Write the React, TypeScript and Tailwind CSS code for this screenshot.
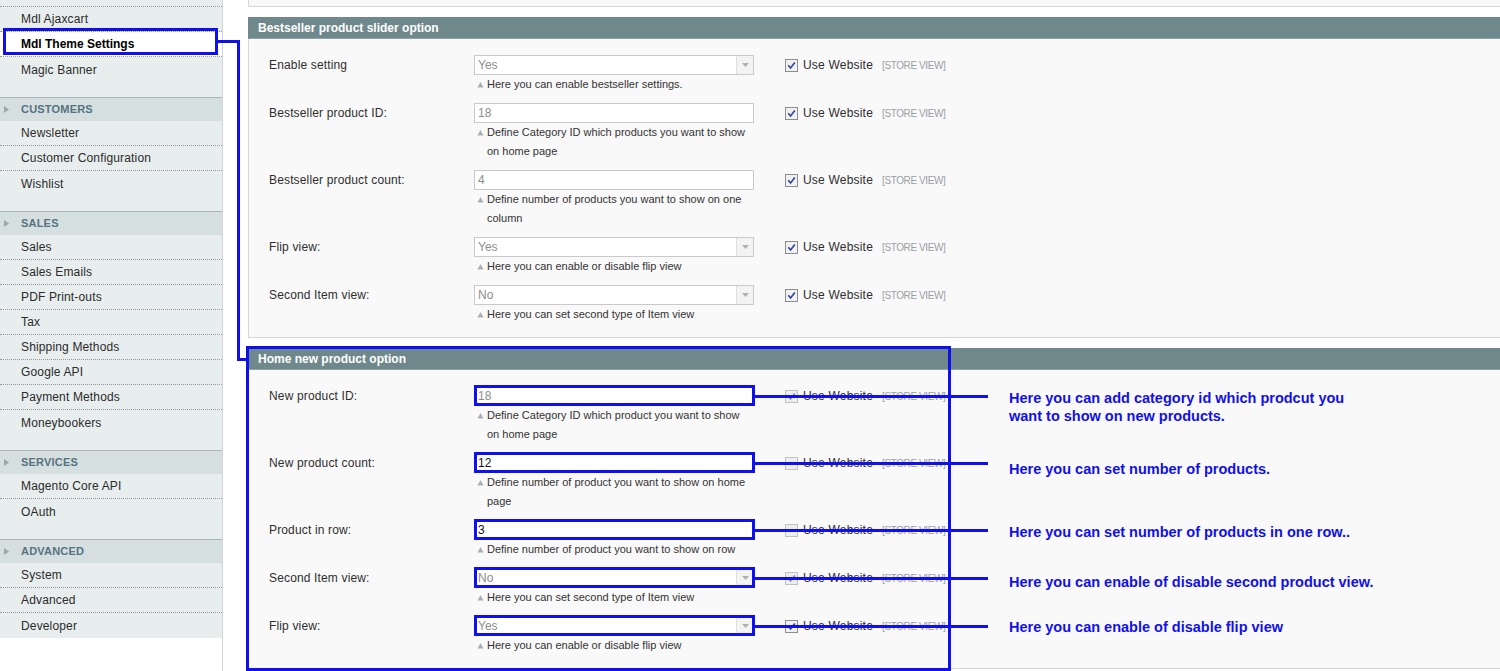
import React from "react";

const BLUE = "border-[#1010ee]";

type Row = {
  label: string;
  kind: "select" | "input";
  value: string;
  dark?: boolean;
  note: string[];
  checked: boolean;
  dim?: boolean;
  ann?: { lines: string[]; mt: string };
};

const rows1: Row[] = [
  { label: "Enable setting", kind: "select", value: "Yes", note: ["Here you can enable bestseller settings."], checked: true },
  { label: "Bestseller product ID:", kind: "input", value: "18", note: ["Define Category ID which products you want to show", "on home page"], checked: true },
  { label: "Bestseller product count:", kind: "input", value: "4", note: ["Define number of products you want to show on one", "column"], checked: true },
  { label: "Flip view:", kind: "select", value: "Yes", note: ["Here you can enable or disable flip view"], checked: true },
  { label: "Second Item view:", kind: "select", value: "No", note: ["Here you can set second type of Item view"], checked: true },
];

const rows2: Row[] = [
  {
    label: "New product ID:", kind: "input", value: "18", note: ["Define Category ID which product you want to show", "on home page"], checked: true, dim: true,
    ann: { lines: ["Here you can add category id which prodcut you", "want to show on new products."], mt: "mt-[3px]" },
  },
  {
    label: "New product count:", kind: "input", value: "12", dark: true, note: ["Define number of product you want to show on home", "page"], checked: false, dim: true,
    ann: { lines: ["Here you can set number of products."], mt: "mt-[7px]" },
  },
  {
    label: "Product in row:", kind: "input", value: "3", dark: true, note: ["Define number of product you want to show on row"], checked: false, dim: true,
    ann: { lines: ["Here you can set number of products in one row.."], mt: "mt-[3px]" },
  },
  {
    label: "Second Item view:", kind: "select", value: "No", note: ["Here you can set second type of Item view"], checked: true, dim: true,
    ann: { lines: ["Here you can enable of disable second product view."], mt: "mt-[5px]" },
  },
  {
    label: "Flip view:", kind: "select", value: "Yes", note: ["Here you can enable or disable flip view"], checked: true,
    ann: { lines: ["Here you can enable of disable flip view"], mt: "mt-[2px]" },
  },
];

function Check({ checked, dim }: { checked: boolean; dim?: boolean }) {
  return (
    <span
      className={
        dim
          ? "inline-flex h-[13px] w-[13px] shrink-0 items-center justify-center border border-[#c2c2c2] bg-[#eeeeee]"
          : "inline-flex h-[13px] w-[13px] shrink-0 items-center justify-center border border-[#8d8d8d] bg-[#f1f1f1]"
      }
    >
      {checked && (
        <svg width="9" height="9" viewBox="0 0 9 9">
          <path d="M1.2 4.3 L3.6 7 L7.8 1.4" fill="none" stroke={dim ? "#8c8ca6" : "#34489a"} strokeWidth="1.7" />
        </svg>
      )}
    </span>
  );
}

function Field({ row, annotated }: { row: Row; annotated: boolean }) {
  return (
    <div className="relative h-[20px] w-[280px] border border-[#c9c9c9] bg-white">
      <div className={row.dark ? "flex h-full items-center pl-[3px] text-[12px] text-[#111]" : "flex h-full items-center pl-[3px] text-[12px] text-[#8d8d8d]"}>
        {row.value}
      </div>
      {row.kind === "select" && (
        <div className="absolute right-0 top-0 flex h-full w-[17px] items-center justify-center border-l border-[#dedede] bg-[#f3f3f3]">
          <svg width="7" height="4" viewBox="0 0 7 4">
            <path d="M0 0 L7 0 L3.5 4 Z" fill="#b0b0b0" />
          </svg>
        </div>
      )}
      {annotated && (
        <>
          <div className={`absolute -left-[1px] -top-[2px] z-10 h-[21px] w-[281px] border-[3px] ${BLUE}`} />
          <div className="absolute left-[279px] top-[8px] z-10 h-[3px] w-[234px] bg-[#1010ee]" />
        </>
      )}
    </div>
  );
}

function FormRow({ row, annotated }: { row: Row; annotated: boolean }) {
  return (
    <div className="flex pb-[9px]">
      <div className="flex h-[20px] w-[205px] shrink-0 items-center text-[12px] tracking-[0.15px] text-[#2e2e2e]">{row.label}</div>
      <div className="w-[280px] shrink-0">
        <Field row={row} annotated={annotated} />
        <div className="mt-0 text-[11px] leading-[19px] text-[#333]">
          {row.note.map((l, i) => (
            <div key={i} className="flex items-center whitespace-nowrap">
              {i === 0 ? (
                <svg width="10" height="8" viewBox="0 0 10 8" className="ml-[3px] shrink-0">
                  <path d="M0.5 6.5 L3.5 1 L6.5 6.5 Z" fill="#a9b0b3" />
                </svg>
              ) : (
                <span className="ml-[3px] w-[10px] shrink-0" />
              )}
              <span>{l}</span>
            </div>
          ))}
        </div>
      </div>
      <div className="ml-[31px] flex h-[20px] w-[224px] shrink-0 items-center">
        <Check checked={row.checked} dim={row.dim} />
        <span className="ml-[5px] w-[79px] text-[12px] tracking-[0.2px] text-[#2e2e2e]">Use Website</span>
        <span className="text-[10px] tracking-[-0.4px] text-[#9aa0a3]">[STORE VIEW]</span>
      </div>
      {row.ann && (
        <div className={`${row.ann.mt} whitespace-nowrap text-[14.5px] font-bold leading-[18px] text-[#1010ee]`}>
          {row.ann.lines.map((l, i) => (
            <div key={i}>{l}</div>
          ))}
        </div>
      )}
    </div>
  );
}

function Fieldset({ title, rows, annotated }: { title: string; rows: Row[]; annotated: boolean }) {
  return (
    <div className="relative">
      <div className="flex h-[22px] items-center border-b border-[#8fa3a6] bg-[#6f888b] pl-[10px] text-[12px] font-bold text-white">
        {title}
      </div>
      <div className="border-b border-l border-[#d6d6d6] bg-[#f9f9f9] pb-[4px] pl-[20px] pt-[16px]">
        {rows.map((r, i) => (
          <FormRow key={i} row={r} annotated={annotated} />
        ))}
      </div>
      {annotated && <div className={`absolute -left-[2px] -top-[2px] -bottom-[2px] z-10 w-[705px] border-[3px] ${BLUE}`} />}
    </div>
  );
}

type Group = { title: string | null; items: string[]; active?: number; last?: boolean };

const groups: Group[] = [
  { title: null, items: ["Mdl Ajaxcart", "Mdl Theme Settings", "Magic Banner"], active: 1 },
  { title: "CUSTOMERS", items: ["Newsletter", "Customer Configuration", "Wishlist"] },
  { title: "SALES", items: ["Sales", "Sales Emails", "PDF Print-outs", "Tax", "Shipping Methods", "Google API", "Payment Methods", "Moneybookers"] },
  { title: "SERVICES", items: ["Magento Core API", "OAuth"] },
  { title: "ADVANCED", items: ["System", "Advanced", "Developer"], last: true },
];

function Sidebar() {
  return (
    <div className="h-full w-[223px] shrink-0 border-r border-[#cfd4d4]">
      {groups.map((g, gi) => (
        <div key={gi} className={g.last ? "bg-[#e8eeee]" : "bg-[#e8eeee] pb-[15px]"}>
          {g.title ? (
            <div className="flex h-[24px] items-center border-t border-[#aab6b8] bg-[#d5dfe0]">
              <svg width="21" height="9" viewBox="0 0 21 9" className="shrink-0">
                <path d="M4 1 L9 4.5 L4 8 Z" fill="#9aa6a8" />
              </svg>
              <span className="text-[11px] font-bold tracking-[0.2px] text-[#557380]">{g.title}</span>
            </div>
          ) : (
            <div className="h-[7px] border-b border-dotted border-[#9a9a9a]" />
          )}
          {g.items.map((it, ii) => {
            const last = ii === g.items.length - 1;
            const active = g.active === ii;
            return (
              <div
                key={ii}
                className={
                  (last ? "h-[25px] " : "h-[25px] border-b border-dotted border-[#9a9a9a] ") +
                  (active ? "flex items-center bg-white pl-[21px] text-[12px] font-bold text-black" : "flex items-center pl-[21px] text-[12px] tracking-[0.15px] text-[#2b2b2b]")
                }
              >
                {it}
              </div>
            );
          })}
        </div>
      ))}
    </div>
  );
}

export default function App() {
  return (
    <div className="relative flex h-[671px] w-[1500px] overflow-hidden bg-white font-['Liberation_Sans',Arial,sans-serif]">
      <Sidebar />
      <div className="ml-[25px] flex-1">
        <div className="h-[7px] border-b border-l border-[#d6d6d6] bg-[#f9f9f9]" />
        <div className="mt-[10px]">
          <Fieldset title="Bestseller product slider option" rows={rows1} annotated={false} />
        </div>
        <div className="mt-[10px]">
          <Fieldset title="Home new product option" rows={rows2} annotated={true} />
        </div>
      </div>
      {/* sidebar annotation */}
      <div className={`absolute left-[3px] top-[28px] z-10 h-[27px] w-[215px] border-[3px] ${BLUE}`} />
      <div className="absolute left-[218px] top-[40px] z-10 h-[3px] w-[22px] bg-[#1010ee]" />
      <div className="absolute left-[237px] top-[40px] z-10 h-[321px] w-[3px] bg-[#1010ee]" />
      <div className="absolute left-[237px] top-[358px] z-10 h-[3px] w-[10px] bg-[#1010ee]" />
    </div>
  );
}
